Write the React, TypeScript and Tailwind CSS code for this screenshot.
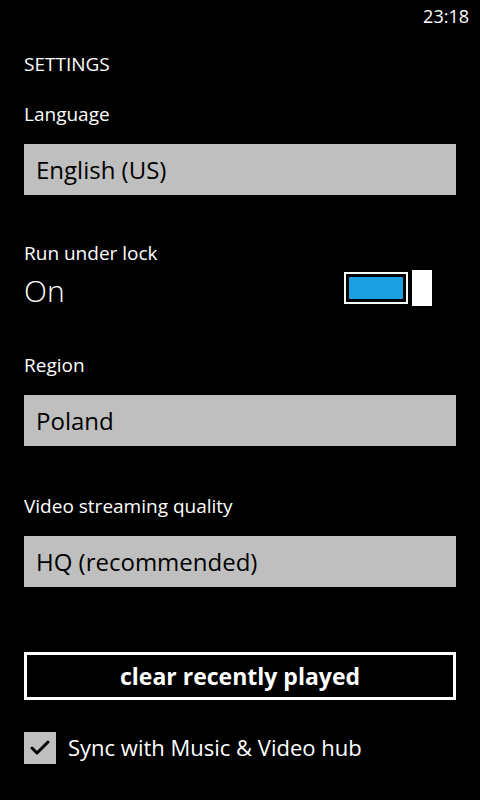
import { Check } from "lucide-react";

const font = { fontFamily: '"Open Sans", "Noto Sans", sans-serif' };

function Label({ children }: { children: React.ReactNode }) {
    return <div className="text-[19px] leading-[24px] text-white">{children}</div>;
}

function Picker({ value }: { value: string }) {
    return (
        <div className="h-[51px] bg-[#bfbfbf] flex items-center px-3 text-[24px] text-black">
            {value}
        </div>
    );
}

export default function App() {
    return (
        <div className="w-[480px] h-[800px] bg-black text-white overflow-hidden" style={font}>
            <div className="h-8 flex justify-end items-center pr-[11px] text-[18px] pt-0">23:18</div>

            <div className="px-6">
                <div className="mt-[20px] text-[19px] leading-[24px]">SETTINGS</div>

                <div className="mt-[26px]">
                    <Label>Language</Label>
                    <div className="mt-[18px]">
                        <Picker value="English (US)" />
                    </div>
                </div>

                <div className="mt-[46px] flex items-center justify-between">
                    <div>
                        <Label>Run under lock</Label>
                        <div className="mt-[8px] text-[30px] leading-[36px] font-light">On</div>
                    </div>
                    <div className="flex items-center mr-6 mt-[26px]">
                        <div className="w-[64px] h-[32px] border-2 border-white p-[3px]">
                            <div className="w-full h-full bg-[#1ba1e2]" />
                        </div>
                        <div className="w-[20px] h-[36px] bg-white ml-[4px]" />
                    </div>
                </div>

                <div className="mt-[44px]">
                    <Label>Region</Label>
                    <div className="mt-[18px]">
                        <Picker value="Poland" />
                    </div>
                </div>

                <div className="mt-[48px]">
                    <Label>Video streaming quality</Label>
                    <div className="mt-[18px]">
                        <Picker value="HQ (recommended)" />
                    </div>
                </div>

                <button className="mt-[65px] w-full h-[48px] border-[3px] border-white text-[23px] font-bold text-white flex items-center justify-center">
                    clear recently played
                </button>

                <div className="mt-[31px] flex items-center gap-3">
                    <div className="w-8 h-8 bg-[#bfbfbf] flex items-center justify-center">
                        <Check className="w-6 h-6 text-black" strokeWidth={3} />
                    </div>
                    <span className="text-[22px]">Sync with Music &amp; Video hub</span>
                </div>
            </div>
        </div>
    );
}
